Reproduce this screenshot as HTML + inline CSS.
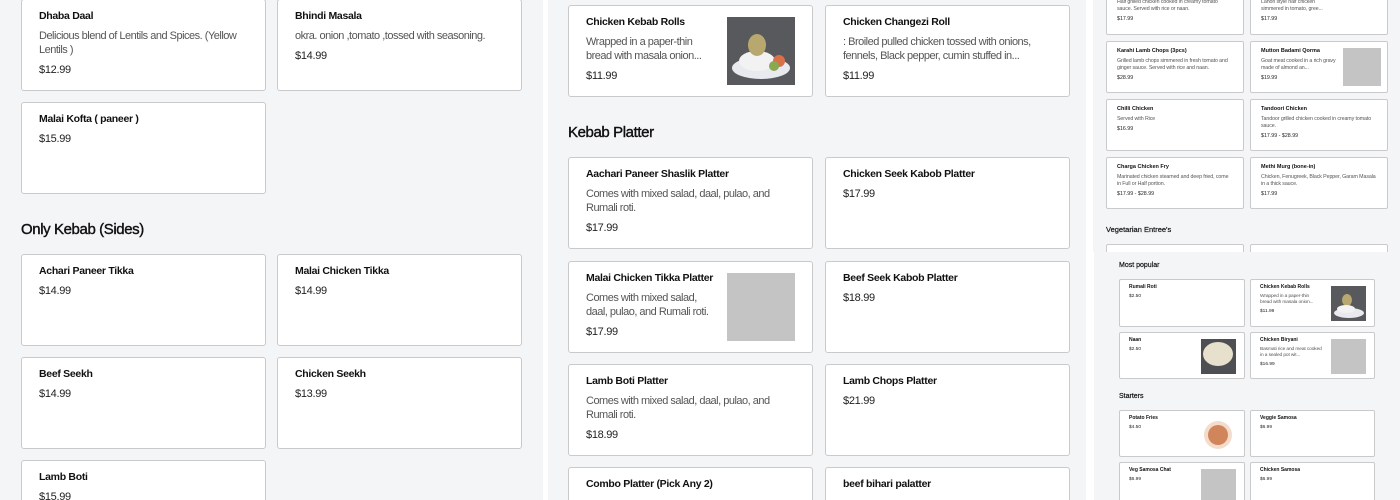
<!DOCTYPE html>
<html><head><meta charset="utf-8"><style>
*{margin:0;padding:0;box-sizing:border-box}
html,body{width:1400px;height:500px;overflow:hidden}
body{background:#fff;font-family:"Liberation Sans",sans-serif;position:relative;color:#111}
.p{position:absolute;background:#f4f5f7;overflow:hidden}
.c{position:absolute;background:#fff;border:1px solid #c9cacc;border-radius:3px;padding:9px 17px;overflow:hidden}
.t{font-size:10.5px;font-weight:bold;line-height:14px;color:#111;letter-spacing:-0.3px}
.d{font-size:11px;line-height:14px;color:#555;margin-top:6px;letter-spacing:-0.5px}
.r{font-size:11px;line-height:14px;color:#222;margin-top:6px;letter-spacing:-0.3px}
.h{position:absolute;font-size:15px;font-weight:normal;color:#111;letter-spacing:-0.4px;-webkit-text-stroke:0.4px #111}
.im{position:absolute;right:17px;top:11px;width:68px;height:68px;background:#c4c4c4}
.s .c{padding:5px 10px;border-radius:2px}
.s .t{font-size:5.5px;line-height:8px;letter-spacing:0}
.s .d{font-size:5.3px;line-height:7px;margin-top:3px;letter-spacing:-0.1px}
.s .r{font-size:5.3px;line-height:7px;margin-top:3px;letter-spacing:0}
.s .h{font-size:7.5px;-webkit-text-stroke:0.2px #111;letter-spacing:0}
.s .im{right:6px;top:6px;width:38px;height:38px}
.b .c{padding:4px 9px}
.b .t{font-size:5px;line-height:7px}
.b .d,.b .r{font-size:4.8px;line-height:6px;margin-top:3px}
.b .im{right:8px;top:6px;width:35px;height:35px}
</style></head><body>

<div class="p" style="left:0;top:0;width:543px;height:500px">
<div class="c" style="left:21px;top:-1px;width:245px;height:92px"><div class="t">Dhaba Daal</div><div class="d">Delicious blend of Lentils and Spices. (Yellow Lentils )</div><div class="r">$12.99</div></div>
<div class="c" style="left:277px;top:-1px;width:245px;height:92px"><div class="t">Bhindi Masala</div><div class="d">okra. onion ,tomato ,tossed with seasoning.</div><div class="r">$14.99</div></div>
<div class="c" style="left:21px;top:102px;width:245px;height:92px"><div class="t">Malai Kofta ( paneer )</div><div class="r">$15.99</div></div>
<div class="h" style="left:21px;top:221px">Only Kebab (Sides)</div>
<div class="c" style="left:21px;top:254px;width:245px;height:92px"><div class="t">Achari Paneer Tikka</div><div class="r">$14.99</div></div>
<div class="c" style="left:277px;top:254px;width:245px;height:92px"><div class="t">Malai Chicken Tikka</div><div class="r">$14.99</div></div>
<div class="c" style="left:21px;top:357px;width:245px;height:92px"><div class="t">Beef Seekh</div><div class="r">$14.99</div></div>
<div class="c" style="left:277px;top:357px;width:245px;height:92px"><div class="t">Chicken Seekh</div><div class="r">$13.99</div></div>
<div class="c" style="left:21px;top:460px;width:245px;height:92px"><div class="t">Lamb Boti</div><div class="r">$15.99</div></div>
</div>

<div class="p" style="left:548px;top:0;width:538px;height:500px">
<div class="c" style="left:20px;top:5px;width:245px;height:92px"><div class="t">Chicken Kebab Rolls</div><div class="d" style="width:128px">Wrapped in a paper-thin bread with masala onion...</div><div class="r">$11.99</div>
<div class="im" style="background:#58595c"><svg width="68" height="68"><ellipse cx="34" cy="51" rx="29" ry="11" fill="#e8eaf0"/><ellipse cx="30" cy="44" rx="18" ry="10" fill="#f2f2f2"/><ellipse cx="30" cy="28" rx="9" ry="11" fill="#b8a870"/><circle cx="52" cy="44" r="6" fill="#d9704a"/><circle cx="47" cy="49" r="5" fill="#8aa850"/></svg></div></div>
<div class="c" style="left:277px;top:5px;width:245px;height:92px"><div class="t">Chicken Changezi Roll</div><div class="d">: Broiled pulled chicken tossed with onions, fennels, Black pepper, cumin stuffed in...</div><div class="r">$11.99</div></div>
<div class="h" style="left:20px;top:124px">Kebab Platter</div>
<div class="c" style="left:20px;top:157px;width:245px;height:92px"><div class="t">Aachari Paneer Shaslik Platter</div><div class="d">Comes with mixed salad, daal, pulao, and Rumali roti.</div><div class="r">$17.99</div></div>
<div class="c" style="left:277px;top:157px;width:245px;height:92px"><div class="t">Chicken Seek Kabob Platter</div><div class="r">$17.99</div></div>
<div class="c" style="left:20px;top:261px;width:245px;height:92px"><div class="t">Malai Chicken Tikka Platter</div><div class="d" style="width:132px">Comes with mixed salad, daal, pulao, and Rumali roti.</div><div class="r">$17.99</div><div class="im"></div></div>
<div class="c" style="left:277px;top:261px;width:245px;height:92px"><div class="t">Beef Seek Kabob Platter</div><div class="r">$18.99</div></div>
<div class="c" style="left:20px;top:364px;width:245px;height:92px"><div class="t">Lamb Boti Platter</div><div class="d">Comes with mixed salad, daal, pulao, and Rumali roti.</div><div class="r">$18.99</div></div>
<div class="c" style="left:277px;top:364px;width:245px;height:92px"><div class="t">Lamb Chops Platter</div><div class="r">$21.99</div></div>
<div class="c" style="left:20px;top:467px;width:245px;height:92px"><div class="t">Combo Platter (Pick Any 2)</div></div>
<div class="c" style="left:277px;top:467px;width:245px;height:92px"><div class="t">beef bihari palatter</div></div>
</div>

<div class="p s" style="left:1093px;top:0;width:307px;height:252px">
<div class="c" style="left:13px;top:-18px;width:138px;height:53px"><div class="t">&nbsp;</div><div class="d">Half grilled chicken cooked in creamy tomato sauce. Served with rice or naan.</div><div class="r">$17.99</div></div>
<div class="c" style="left:157px;top:-18px;width:138px;height:53px"><div class="t">&nbsp;</div><div class="d" style="width:75px">Lahori style half chicken simmered in tomato, gree...</div><div class="r">$17.99</div></div>
<div class="c" style="left:13px;top:41px;width:138px;height:52px"><div class="t">Karahi Lamb Chops (3pcs)</div><div class="d">Grilled lamb chops simmered in fresh tomato and ginger sauce. Served with rice and naan.</div><div class="r">$28.99</div></div>
<div class="c" style="left:157px;top:41px;width:138px;height:52px"><div class="t">Mutton Badami Qorma</div><div class="d" style="width:75px">Goat meat cooked in a rich gravy made of almond an...</div><div class="r">$19.99</div><div class="im"></div></div>
<div class="c" style="left:13px;top:99px;width:138px;height:52px"><div class="t">Chilli Chicken</div><div class="d">Served with Rice</div><div class="r">$16.99</div></div>
<div class="c" style="left:157px;top:99px;width:138px;height:52px"><div class="t">Tandoori Chicken</div><div class="d">Tandoor grilled chicken cooked in creamy tomato sauce.</div><div class="r">$17.99 - $28.99</div></div>
<div class="c" style="left:13px;top:157px;width:138px;height:52px"><div class="t">Charga Chicken Fry</div><div class="d">Marinated chicken steamed and deep fried, come in Full or Half portion.</div><div class="r">$17.99 - $28.99</div></div>
<div class="c" style="left:157px;top:157px;width:138px;height:52px"><div class="t">Methi Murg (bone-in)</div><div class="d">Chicken, Fenugreek, Black Pepper, Garam Masala in a thick sauce.</div><div class="r">$17.99</div></div>
<div class="h" style="left:13px;top:225px">Vegetarian Entree's</div>
<div class="c" style="left:13px;top:244px;width:138px;height:52px"></div>
<div class="c" style="left:157px;top:244px;width:138px;height:52px"></div>
</div>

<div class="p s b" style="left:1094px;top:252px;width:306px;height:248px">
<div class="h" style="left:25px;top:10px;font-size:7px">Most popular</div>
<div class="c" style="left:25px;top:27px;width:126px;height:48px"><div class="t">Rumali Roti</div><div class="r">$2.50</div></div>
<div class="c" style="left:156px;top:27px;width:125px;height:48px"><div class="t">Chicken Kebab Rolls</div><div class="d" style="width:62px">Wrapped in a paper-thin bread with masala onion...</div><div class="r">$11.99</div><div class="im" style="background:#58595c"><svg width="35" height="35"><ellipse cx="18" cy="27" rx="15" ry="5" fill="#e8eaf0"/><ellipse cx="16" cy="14" rx="5" ry="6" fill="#b8a870"/><ellipse cx="15" cy="23" rx="9" ry="4" fill="#f2f2f2"/></svg></div></div>
<div class="c" style="left:25px;top:80px;width:126px;height:47px"><div class="t">Naan</div><div class="r">$2.50</div><div class="im" style="background:#4d4f52"><svg width="35" height="35"><ellipse cx="17" cy="15" rx="15" ry="12" fill="#e6e0cc"/></svg></div></div>
<div class="c" style="left:156px;top:80px;width:125px;height:47px"><div class="t">Chicken Biryani</div><div class="d" style="width:62px">Basmati rice and meat cooked in a sealed pot wit...</div><div class="r">$16.99</div><div class="im"></div></div>
<div class="h" style="left:25px;top:141px;font-size:7px">Starters</div>
<div class="c" style="left:25px;top:158px;width:126px;height:47px"><div class="t">Potato Fries</div><div class="r">$4.50</div><div class="im" style="background:#fff"><svg width="35" height="35"><circle cx="17" cy="18" r="14" fill="#f4dccc"/><circle cx="17" cy="18" r="10" fill="#d0865a"/></svg></div></div>
<div class="c" style="left:156px;top:158px;width:125px;height:47px"><div class="t">Veggie Samosa</div><div class="r">$6.99</div></div>
<div class="c" style="left:25px;top:210px;width:126px;height:47px"><div class="t">Veg Samosa Chat</div><div class="r">$6.99</div><div class="im"></div></div>
<div class="c" style="left:156px;top:210px;width:125px;height:47px"><div class="t">Chicken Samosa</div><div class="r">$6.99</div></div>
</div>
</body></html>
